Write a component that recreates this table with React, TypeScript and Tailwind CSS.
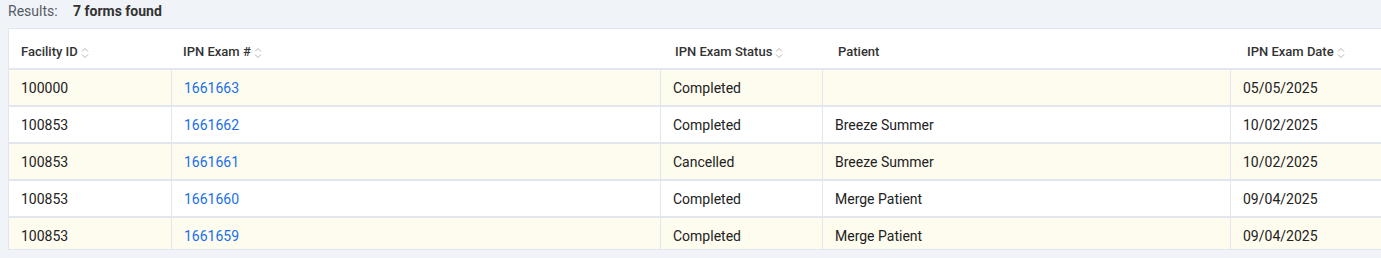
import React from "react";

const rows = [
  { fac: "100000", exam: "1661663", status: "Completed", patient: "", date: "05/05/2025" },
  { fac: "100853", exam: "1661662", status: "Completed", patient: "Breeze Summer", date: "10/02/2025" },
  { fac: "100853", exam: "1661661", status: "Cancelled", patient: "Breeze Summer", date: "10/02/2025" },
  { fac: "100853", exam: "1661660", status: "Completed", patient: "Merge Patient", date: "09/04/2025" },
  { fac: "100853", exam: "1661659", status: "Completed", patient: "Merge Patient", date: "09/04/2025" },
];

function SortIcon() {
  return (
    <svg width="8" height="12" viewBox="0 0 8 12" className="ml-[3px] mt-[3px] shrink-0" fill="none">
      <path d="M1 4.5 L4 1.5 L7 4.5" stroke="#b5b5b5" strokeWidth="1" />
      <path d="M1 7.5 L4 10.5 L7 7.5" stroke="#b5b5b5" strokeWidth="1" />
    </svg>
  );
}

const cols = "grid grid-cols-[162px_489px_162px_408px_260px]";

export default function App() {
  return (
    <div className="w-[1381px] h-[258px] bg-[#f0f3f8] overflow-hidden" style={{ fontFamily: "Roboto, 'Noto Sans', sans-serif" }}>
      <div className="flex items-center h-[22px] pl-2 text-[14px]">
        <span className="text-[#555b63] w-[65px]">Results:</span>
        <span className="font-bold text-[#333]">7 forms found</span>
      </div>
      <div className="mt-[6px] ml-2 h-[222px] overflow-hidden border-l border-t border-b border-[#e2e7ef] bg-white">
        <div className="w-[1481px]">
          <div className={`${cols} h-[41px] bg-white border-b-2 border-[#e2e7ef] text-[13px] font-medium text-[#333]`}>
            <div className="flex items-start pt-[15px] pl-[12px]"><span className="leading-[16px]">Facility ID</span><SortIcon /></div>
            <div className="flex items-start pt-[15px] pl-[12px]"><span className="leading-[16px]">IPN Exam #</span><SortIcon /></div>
            <div className="flex items-start pt-[15px] pl-[15px]"><span className="leading-[16px]">IPN Exam Status</span><SortIcon /></div>
            <div className="flex items-start pt-[15px] pl-[16px]"><span className="leading-[16px]">Patient</span></div>
            <div className="flex items-start pt-[15px] pl-[17px]"><span className="leading-[16px]">IPN Exam Date</span><SortIcon /></div>
          </div>
          {rows.map((r, i) => (
            <div
              key={i}
              className={`${cols} h-[37px] border-b-2 border-[#e2e7ef] text-[14px] text-[#222] ${i % 2 === 0 ? "bg-[#fefcef]" : "bg-white"}`}
            >
              <div className="flex items-center pt-[2px] pl-[12px]">{r.fac}</div>
              <div className="flex items-center pt-[2px] pl-[12px] border-l border-[#e2e7ef] text-[#1a6fe8]">{r.exam}</div>
              <div className="flex items-center pt-[2px] pl-[12px] border-l border-[#e2e7ef]">{r.status}</div>
              <div className="flex items-center pt-[2px] pl-[12px] border-l border-[#e2e7ef]">{r.patient}</div>
              <div className="flex items-center pt-[2px] pl-[12px] border-l border-[#e2e7ef]">{r.date}</div>
            </div>
          ))}
        </div>
      </div>
    </div>
  );
}
